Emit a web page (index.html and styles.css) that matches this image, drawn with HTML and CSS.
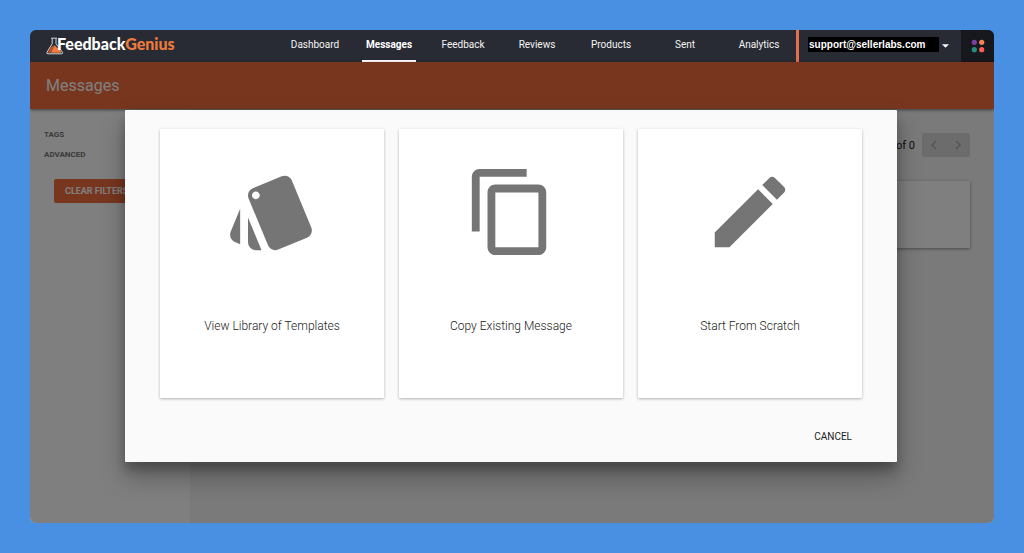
FILE: index.html
```html
<!DOCTYPE html>
<html lang="en">
<head>
<meta charset="utf-8">
<meta name="viewport" content="width=device-width, initial-scale=1">
<title>FeedbackGenius – Messages</title>
<link rel="stylesheet" href="styles.css">
</head>
<body>
<div class="app">
  <header class="topbar">
    <a class="brand" href="#">
      <svg class="brand-flask" viewBox="0 0 18 18" aria-hidden="true">
        <path d="M5 1.2h6M6.2 1.5v5.2L1 15.2q-.8 1.6 1 1.6h13.400q1.800 0 1-1.600L10 6.700V1.500" fill="none" stroke="#d5d5d5" stroke-width="1"/>
        <path d="M4.900 10.300 2.300 14.700q-.5 1 .5 1h1.600L8.300 8.300z" fill="#c4562f"/>
        <path d="m8.700 8-3.900 7.700h9.900q1 0 .5-1L12.700 10.700q-2 1-4-2.700z" fill="#f07b3c"/>
      </svg>
      <span class="brand-name">Feedback<span class="brand-accent">Genius</span></span>
    </a>
    <nav class="nav" aria-label="Main">
      <a class="nav-link" href="#">Dashboard</a>
      <a class="nav-link nav-link-active" href="#" aria-current="page">Messages</a>
      <a class="nav-link" href="#">Feedback</a>
      <a class="nav-link" href="#">Reviews</a>
      <a class="nav-link" href="#">Products</a>
      <a class="nav-link" href="#">Sent</a>
      <a class="nav-link" href="#">Analytics</a>
    </nav>
    <button class="account" type="button">
      <span class="account-email">support@sellerlabs.com</span>
      <svg class="caret" viewBox="0 0 8 4" aria-hidden="true"><path d="M0 0h8L4 4z"/></svg>
    </button>
    <button class="apps" type="button" aria-label="Apps">
      <svg class="apps-icon" viewBox="0 0 14 14" aria-hidden="true">
        <circle cx="3.300" cy="3.300" r="2.600" fill="#7d3fa5"/>
        <circle cx="10.700" cy="3.300" r="2.600" fill="#f58352"/>
        <circle cx="3.300" cy="10.700" r="2.600" fill="#288c7c"/>
        <circle cx="10.700" cy="10.700" r="2.600" fill="#fb5d52"/>
      </svg>
    </button>
  </header>

  <div class="page">
    <div class="titlebar"><h1 class="title">Messages</h1></div>
    <div class="columns">
      <aside class="sidebar">
        <h2 class="filter-name">Tags</h2>
        <h2 class="filter-name">Advanced</h2>
        <button class="clear" type="button">Clear Filters</button>
      </aside>
      <main class="content">
        <div class="pager">
          <span class="pager-label">0 of 0</span>
          <div class="pager-buttons">
            <button class="pager-button" type="button" aria-label="Previous page">
              <svg class="chevron" viewBox="0 0 6 10" aria-hidden="true"><path d="M5 1 1 5l4 4"/></svg>
            </button>
            <button class="pager-button" type="button" aria-label="Next page">
              <svg class="chevron" viewBox="0 0 6 10" aria-hidden="true"><path d="m1 1 4 4-4 4"/></svg>
            </button>
          </div>
        </div>
        <div class="panel"></div>
      </main>
    </div>

    <div class="overlay">
      <div class="dialog" role="dialog" aria-modal="true" aria-label="New message">
        <div class="choices">
          <button class="choice" type="button">
            <svg class="choice-icon" viewBox="0 0 24 24" aria-hidden="true"><path d="M2.530 19.650l1.340.560v-9.030l-2.430 5.860c-.410 1.020.080 2.190 1.090 2.610zm19.500-3.700L17.070 3.980c-.310-.750-1.040-1.210-1.810-1.230-.260 0-.530.040-.790.150L7.100 5.950c-.750.310-1.210 1.030-1.230 1.800-.010.270.040.540.150.800l4.960 11.970c.310.760 1.050 1.220 1.830 1.230.260 0 .520-.050.770-.150l7.360-3.050c1.020-.420 1.510-1.590 1.090-2.600zM7.880 8.750c-.550 0-1-.450-1-1s.450-1 1-1 1 .450 1 1-.450 1-1 1zm-2 11c0 1.100.900 2 2 2h1.450l-3.450-8.340v6.340z"/></svg>
            <span class="choice-label">View Library of Templates</span>
          </button>
          <button class="choice" type="button">
            <svg class="choice-icon" viewBox="0 0 24 24" aria-hidden="true"><path d="M16 1H4c-1.100 0-2 .900-2 2v14h2V3h12V1zm3 4H8c-1.100 0-2 .900-2 2v14c0 1.100.900 2 2 2h11c1.100 0 2-.900 2-2V7c0-1.100-.900-2-2-2zm0 16H8V7h11v14z"/></svg>
            <span class="choice-label">Copy Existing Message</span>
          </button>
          <button class="choice" type="button">
            <svg class="choice-icon" viewBox="0 0 24 24" aria-hidden="true"><path d="M3 17.250V21h3.750L17.810 9.940l-3.750-3.750L3 17.250zM20.710 7.040c.390-.390.390-1.020 0-1.410l-2.340-2.340c-.390-.390-1.020-.390-1.410 0l-1.830 1.830 3.750 3.750 1.830-1.830z"/></svg>
            <span class="choice-label">Start From Scratch</span>
          </button>
        </div>
        <div class="dialog-actions">
          <button class="cancel" type="button">Cancel</button>
        </div>
      </div>
    </div>
  </div>
</div>
</body>
</html>
```
FILE: styles.css
```css
* {
  box-sizing: border-box;
}

body {
  margin: 0;
  padding: 30px;
  min-height: 100vh;
  display: flex;
  background: #4990e2;
  color: #212121;
  font-family: Roboto, "Liberation Sans", sans-serif;
}

button {
  margin: 0;
  padding: 0;
  border: 0;
  background: none;
  color: inherit;
  font: inherit;
}

.app {
  flex: 1;
  min-width: 0;
  display: flex;
  flex-direction: column;
  overflow: hidden;
  border-radius: 6px;
}

/* Top bar */

.topbar {
  display: flex;
  height: 32px;
  background: #282b33;
  color: #fff;
}

.brand {
  display: flex;
  align-items: center;
  padding-left: 16px;
  color: #fff;
  text-decoration: none;
}

.brand-flask {
  width: 18px;
  height: 18px;
  margin-right: -7px;
}

.brand-name {
  position: relative;
  padding-bottom: 4px;
  font: 900 16px/20px Lato, "Open Sans", sans-serif;
}

.brand-accent {
  color: #ee7b3c;
}

.nav {
  display: grid;
  grid-template-columns: repeat(7, 74px);
  justify-items: center;
  margin-left: auto;
}

.nav-link {
  padding: 0 4px;
  border-bottom: 2px solid transparent;
  color: #f4f4f4;
  font-size: 10px;
  line-height: 30px;
  text-decoration: none;
}

.nav-link-active {
  border-color: #fff;
  color: #fff;
  font-weight: 700;
}

.account {
  display: flex;
  align-items: center;
  gap: 3px;
  width: 165px;
  padding: 0 12px 3px 9px;
  border-left: 3px solid #e0714a;
}

.account-email {
  flex: 1;
  padding-left: 1px;
  background: #000;
  font: bold 10px/15px "Liberation Sans", sans-serif;
  text-align: left;
}

.caret {
  width: 7px;
  height: 4px;
  margin-top: 3px;
  fill: #fff;
}

.apps {
  display: grid;
  place-items: center;
  width: 33px;
  background: #16181e;
}

.apps-icon {
  width: 14px;
  height: 14px;
}

/* Page behind the dialog */

.page {
  position: relative;
  flex: 1;
  display: flex;
  flex-direction: column;
}

.titlebar {
  z-index: 1;
  padding: 0 16px;
  background: #f06c3e;
  box-shadow: 0 1px 3px rgba(0, 0, 0, 0.5);
}

.title {
  margin: 0;
  color: #fff;
  font-size: 16px;
  font-weight: 400;
  line-height: 47px;
}

.columns {
  flex: 1;
  display: flex;
}

.sidebar {
  flex: 0 0 160px;
  padding: 16px 14px;
  background: #fff;
}

.filter-name {
  margin: 0;
  color: #747474;
  font-size: 8px;
  font-weight: 700;
  line-height: 20px;
  text-transform: uppercase;
}

.clear {
  margin: 14px 10px;
  padding: 0 11px;
  border-radius: 2px;
  background: #f06c3e;
  color: #fff;
  font-size: 9px;
  font-weight: 700;
  line-height: 24px;
  text-transform: uppercase;
  white-space: nowrap;
}

.content {
  flex: 1;
  padding: 24px 24px 24px 16px;
  background: #f4f4f4;
}

.pager {
  display: flex;
  justify-content: flex-end;
  align-items: center;
  gap: 7px;
  font-size: 11px;
}

.pager-buttons {
  display: flex;
  border-radius: 2px;
  background: #d8d8d8;
}

.pager-button {
  display: grid;
  place-items: center;
  width: 24px;
  height: 24px;
}

.chevron {
  width: 6px;
  height: 10px;
  fill: none;
  stroke: #aaa;
  stroke-width: 1.500;
}

.panel {
  height: 67px;
  margin-top: 24px;
  background: #fff;
  box-shadow: 0 1px 3px rgba(0, 0, 0, 0.4);
}

/* Dialog */

.overlay {
  position: absolute;
  inset: 0;
  z-index: 2;
  padding: 48px 97px 61px 95px;
  background: rgba(0, 0, 0, 0.5);
}

.dialog {
  padding: 19px 35px 13px;
  border-radius: 1px;
  background: #fafafa;
  box-shadow: 0 8px 10px rgba(0, 0, 0, 0.2), 0 14px 26px rgba(0, 0, 0, 0.3);
}

.choices {
  display: grid;
  grid-template-columns: repeat(3, 1fr);
  gap: 15px;
}

.choice {
  display: flex;
  flex-direction: column;
  align-items: center;
  gap: 58px;
  padding: 36px 12px 62px;
  border-radius: 1px;
  background: #fff;
  box-shadow: 0 1px 3px rgba(0, 0, 0, 0.3);
}

.choice-icon {
  width: 94px;
  height: 94px;
  fill: #757575;
}

.choice-label {
  font-size: 12px;
  font-weight: 300;
  line-height: 19px;
}

.dialog-actions {
  display: flex;
  justify-content: flex-end;
  padding-top: 27px;
}

.cancel {
  padding: 0 10px;
  font-size: 10px;
  line-height: 24px;
  text-transform: uppercase;
}
```
